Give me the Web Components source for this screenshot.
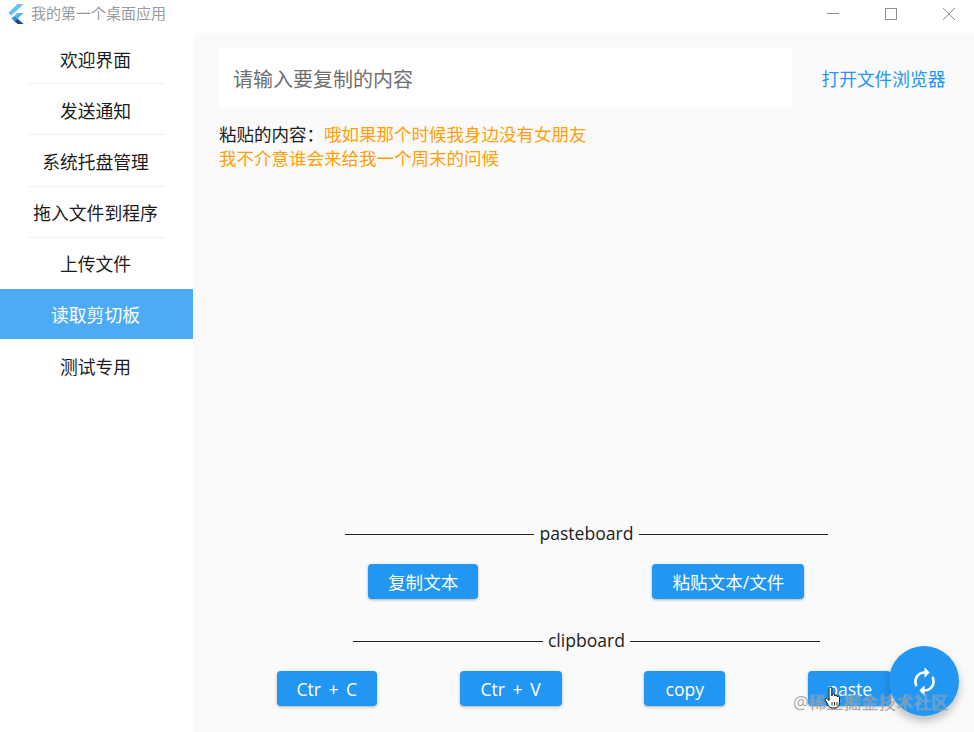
<!DOCTYPE html>
<html lang="zh">
<head>
<meta charset="utf-8">
<title>我的第一个桌面应用</title>
<style>
  html, body { margin: 0; height: 100%; }
  body { font-family: "Open Sans", "Noto Sans CJK SC", sans-serif; overflow: hidden; }
</style>
</head>
<body>
<app-window>
  <title-bar slot="top" label="我的第一个桌面应用"></title-bar>
  <side-nav slot="side">
    <nav-item>欢迎界面</nav-item>
    <nav-item>发送通知</nav-item>
    <nav-item>系统托盘管理</nav-item>
    <nav-item>拖入文件到程序</nav-item>
    <nav-item>上传文件</nav-item>
    <nav-item active>读取剪切板</nav-item>
    <nav-item last>测试专用</nav-item>
  </side-nav>
  <clipboard-page></clipboard-page>
</app-window>

<script>
const FONT = `"Open Sans", "Noto Sans CJK SC", sans-serif`;

class app_window extends HTMLElement {
    constructor() {
        super();
        this.attachShadow({ mode: 'open' });
        this.shadowRoot.innerHTML = `
        <style>
        :host { display: flex; flex-direction: column; width: 974px; height: 732px; position: relative; background: #fff; overflow: hidden; }
        .body { flex: 1; display: flex; min-height: 0; }
        .main { flex: 1; display: flex; min-width: 0; background: #fafafa; }
        </style>
        <slot name="top"></slot>
        <div class="body">
            <slot name="side"></slot>
            <div class="main"><slot></slot></div>
        </div>`;
    }
}
customElements.define('app-window', app_window);

class title_bar extends HTMLElement {
    constructor() {
        super();
        this.attachShadow({ mode: 'open' });
    }
    connectedCallback() {
        this.shadowRoot.innerHTML = `
        <style>
        :host { display: flex; align-items: center; height: 33px; background: #fff; font: 15px ${FONT}; color: #9a9a9a; }
        .logo { width: 16px; height: 20px; margin: 0 7px 6px 8px; }
        .label { flex: 1; margin-top: -9px; }
        .btns { display: flex; margin-top: -6px; padding-right: 19px; }
        .btns svg { width: 12px; height: 12px; margin-left: 46px; display: block; fill: none; stroke: #8f8f8f; stroke-width: 1; }
        </style>
        <svg class="logo" viewBox="0 0 16 20">
            <polygon points="9.6,0 15.6,0 3.4,11.6 0.4,8.7" fill="#5fc3f5"/>
            <polygon points="9.4,9 15.6,9 9.4,15 6.4,12" fill="#55b8f0"/>
            <polygon points="6.4,17.2 9.4,14.6 15.6,20 9.6,20" fill="#0f4f8a"/>
            <polygon points="3.4,14.6 6.4,12 9.4,14.6 6.4,17.2" fill="#2f8fd8"/>
        </svg>
        <span class="label">${this.getAttribute('label')}</span>
        <div class="btns">
            <svg viewBox="0 0 12 12"><path d="M0 5.5h12"/></svg>
            <svg viewBox="0 0 12 12"><rect x=".5" y=".5" width="11" height="11"/></svg>
            <svg viewBox="0 0 12 12"><path d="M0 0l12 12M12 0L0 12"/></svg>
        </div>`;
    }
}
customElements.define('title-bar', title_bar);

class side_nav extends HTMLElement {
    constructor() {
        super();
        this.attachShadow({ mode: 'open' });
        this.shadowRoot.innerHTML = `
        <style>
        :host { display: block; width: 193px; flex: none; background: #fff; }
        </style>
        <slot></slot>`;
    }
}
customElements.define('side-nav', side_nav);

class nav_item extends HTMLElement {
    constructor() {
        super();
        this.attachShadow({ mode: 'open' });
        this.shadowRoot.innerHTML = `
        <style>
        :host { display: flex; align-items: center; justify-content: center; box-sizing: border-box; height: 51.2px; padding-right: 2px; position: relative; font: 17.8px ${FONT}; color: #1c1c1c; }
        :host([active]) { background: #4dabf5; color: #fff; height: 50px; margin-bottom: 1.2px; }
        .rule { position: absolute; left: 29px; right: 28px; bottom: 0; height: 1px; background: #efefef; }
        :host([active]) .rule, :host([last]) .rule, :host([nosep]) .rule { display: none; }
        </style>
        <slot></slot>
        <div class="rule"></div>`;
    }
    connectedCallback() {
        // no rule above the highlighted row
        if (this.nextElementSibling && this.nextElementSibling.hasAttribute('active')) {
            this.setAttribute('nosep', '');
        }
    }
}
customElements.define('nav-item', nav_item);

class section_rule extends HTMLElement {
    constructor() {
        super();
        this.attachShadow({ mode: 'open' });
        this.shadowRoot.innerHTML = `
        <style>
        :host { display: flex; align-items: center; justify-content: center; gap: 5px; font: 17.6px/22px ${FONT}; color: #222; }
        i { display: block; width: 189.5px; height: 1px; background: #222; }
        span { display: block; padding-bottom: 2px; }
        </style>
        <i></i><span><slot></slot></span><i></i>`;
    }
}
customElements.define('section-rule', section_rule);

class raised_button extends HTMLElement {
    constructor() {
        super();
        this.attachShadow({ mode: 'open' });
        this.shadowRoot.innerHTML = `
        <style>
        :host { display: inline-flex; align-items: center; justify-content: center; box-sizing: border-box; height: 35px; padding: 0 20px; border-radius: 4px; background: #2196f3; color: #fff; font: 17.6px ${FONT}; word-spacing: 3px; box-shadow: 0 1px 3px rgba(0,0,0,.3); white-space: nowrap; }
        :host([w]) { padding: 0; width: var(--w); }
        </style>
        <slot></slot>`;
    }
    connectedCallback() {
        if (this.hasAttribute('w')) this.style.setProperty('--w', this.getAttribute('w') + 'px');
    }
}
customElements.define('raised-button', raised_button);

class round_fab extends HTMLElement {
    constructor() {
        super();
        this.attachShadow({ mode: 'open' });
        this.shadowRoot.innerHTML = `
        <style>
        :host { position: absolute; left: 889px; top: 646px; width: 70px; height: 70px; border-radius: 50%; background: #2196f3; box-shadow: 0 5px 9px rgba(0,0,0,.25); display: flex; align-items: center; justify-content: center; }
        svg { width: 31px; height: 31px; fill: #fff; }
        </style>
        <svg viewBox="0 0 24 24"><path d="M12 6v3l4-4-4-4v3c-4.42 0-8 3.58-8 8 0 1.57.46 3.03 1.24 4.26L6.7 14.8c-.45-.83-.7-1.79-.7-2.8 0-3.31 2.69-6 6-6zm6.76 1.74L17.3 9.2c.44.84.7 1.79.7 2.8 0 3.31-2.69 6-6 6v-3l-4 4 4 4v-3c4.42 0 8-3.58 8-8 0-1.57-.46-3.03-1.24-4.26z"/></svg>`;
    }
}
customElements.define('round-fab', round_fab);

class clipboard_page extends HTMLElement {
    constructor() {
        super();
        this.attachShadow({ mode: 'open' });
        this.shadowRoot.innerHTML = `
        <style>
        :host { flex: 1; display: flex; flex-direction: column; min-width: 0; font: 17.6px ${FONT}; color: #222; }
        .top { display: flex; align-items: center; padding: 15px 0 0 26px; }
        .input { width: 559px; height: 60px; padding-left: 14px; display: flex; align-items: center; background: #fff; font-size: 20px; color: #6f6f6f; }
        .link { margin-left: 29.5px; color: #2196f3; font-size: 17.7px; }
        .pasted { margin: 14px 0 0 26px; line-height: 24px; font-size: 17.5px; }
        .pasted b { font-weight: 400; color: #ff9f0a; }
        .bottom { margin-top: auto; padding: 0 0 26px; }
        .bottom section-rule { padding-left: 6px; }
        .row { display: flex; margin: 18px 0 30px; }
        .row.first { padding-left: 175px; gap: 174px; }
        .row.even { justify-content: space-evenly; margin-bottom: 0; padding-left: 1px; }
        </style>
        <div class="top">
            <div class="input">请输入要复制的内容</div>
            <div class="link">打开文件浏览器</div>
        </div>
        <div class="pasted">粘贴的内容：<b>哦如果那个时候我身边没有女朋友<br>我不介意谁会来给我一个周末的问候</b></div>
        <div class="bottom">
            <section-rule>pasteboard</section-rule>
            <div class="row first">
                <raised-button>复制文本</raised-button>
                <raised-button>粘贴文本/文件</raised-button>
            </div>
            <section-rule>clipboard</section-rule>
            <div class="row even">
                <raised-button w="100">Ctr + C</raised-button>
                <raised-button w="102">Ctr + V</raised-button>
                <raised-button w="81">copy</raised-button>
                <raised-button w="83">paste</raised-button>
            </div>
        </div>`;
    }
}
customElements.define('clipboard-page', clipboard_page);

class juejin_mark extends HTMLElement {
    constructor() {
        super();
        this.attachShadow({ mode: 'open' });
        this.shadowRoot.innerHTML = `
        <style>
        :host { position: absolute; left: 793px; top: 689px; font: 17.5px/26px ${FONT}; color: rgba(95,95,95,.55); white-space: nowrap; text-shadow: 0 0 1px rgba(255,255,255,.7); }
        svg { position: absolute; left: 31px; top: -3px; width: 17px; height: 24px; }
        </style>
        @稀土掘金技术社区
        <svg viewBox="0 0 17 24"><path d="M5 2.5a1.4 1.4 0 0 1 2.8 0V10l.4-1.3a1.3 1.3 0 0 1 2.5.2v1.2a1.3 1.3 0 0 1 2.5 0v1a1.2 1.2 0 0 1 2.3.3v5.1c0 3-1.8 5.5-4.8 5.5H8.3c-2 0-3-1-3.9-2.5L1.2 14c-.7-1.2 1-2.4 2-1.3L5 14.6z" fill="#fff" stroke="#111" stroke-width="1"/><path d="M8 16v3.5M10.5 16v3.5M13 16v3.5" stroke="#111" stroke-width=".9"/></svg>`;
    }
}
customElements.define('juejin-mark', juejin_mark);

const win = document.querySelector('app-window');
win.appendChild(document.createElement('round-fab'));
win.appendChild(document.createElement('juejin-mark'));
</script>
</body>
</html>
